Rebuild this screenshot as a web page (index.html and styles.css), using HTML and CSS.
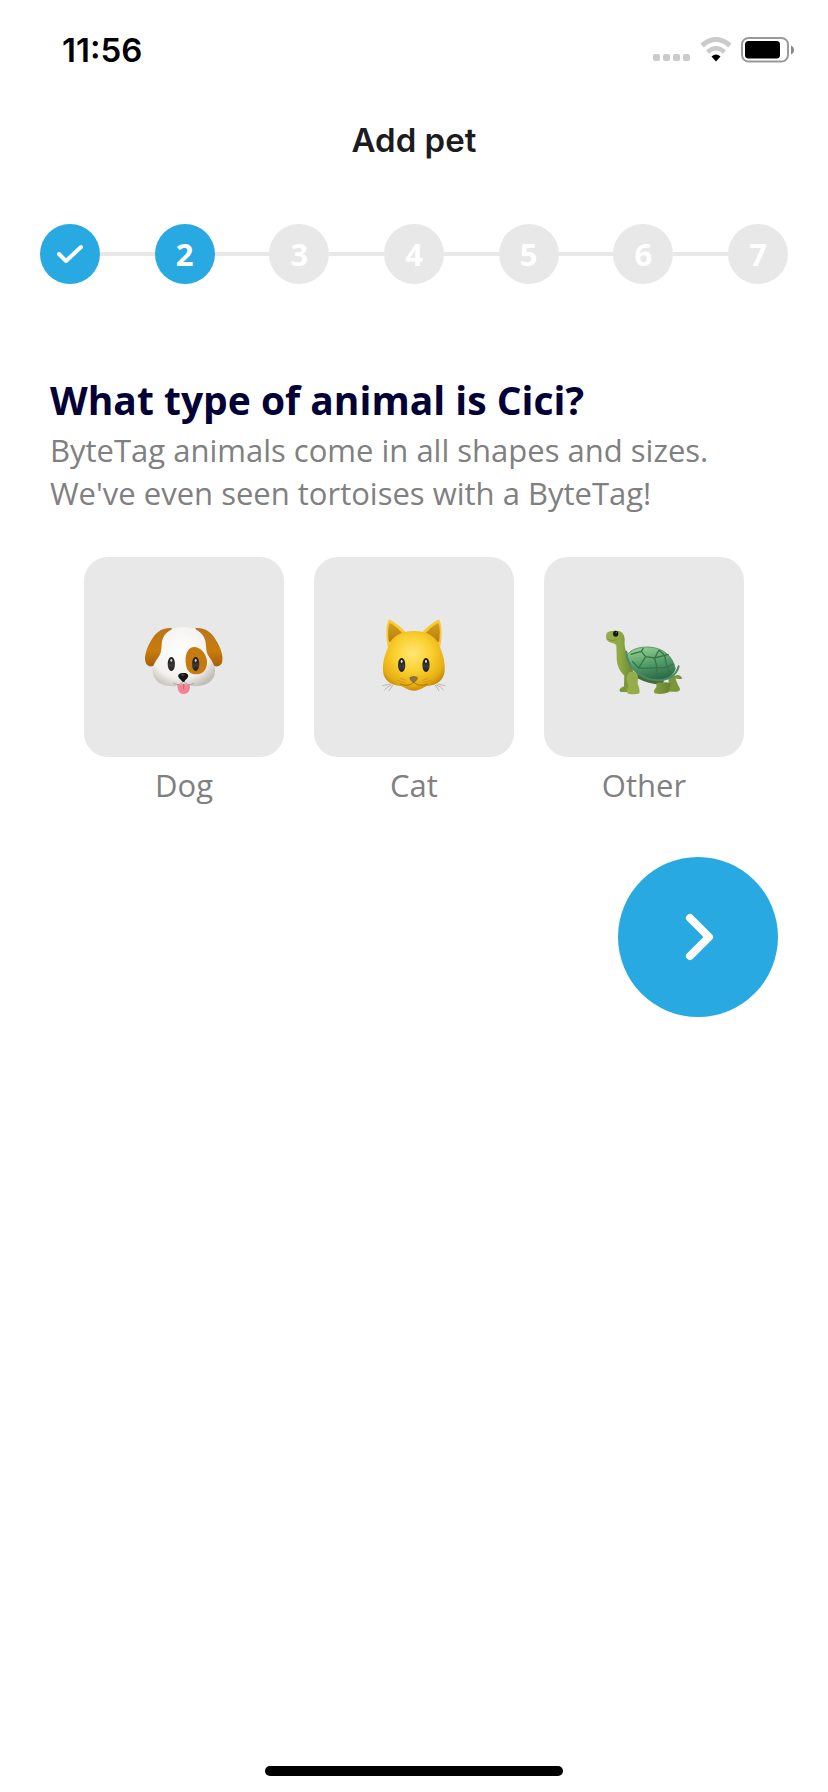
FILE: index.html
```
<!DOCTYPE html>
<html lang="en">
<head>
  <meta charset="UTF-8" />
  <meta name="viewport" content="width=device-width, initial-scale=1.0"/>
  <title>Add pet</title>
  <link rel="stylesheet" href="styles.css">
</head>
<body>
  <div class="status-bar">
    <span class="time">11:56</span>
    <div class="status-icons">
      <svg width="38" height="26" viewBox="0 0 38 26" fill="#cbcbcb">
        <rect x="0" y="17" width="7" height="7" rx="2"/>
        <rect x="10" y="17" width="7" height="7" rx="2"/>
        <rect x="20" y="17" width="7" height="7" rx="2"/>
        <rect x="30" y="17" width="7" height="7" rx="2"/>
      </svg>
      <svg width="32" height="26" viewBox="0 0 32 26" fill="none">
        <path d="M2 8.500Q16-3.500 30 8.500" stroke="#cbcbcb" stroke-width="5"/>
        <path d="M7.500 15Q16 7.500 24.500 15" stroke="#cbcbcb" stroke-width="4.500"/>
        <path d="M11.500 19.500Q16 15.500 20.500 19.500L16 24.500Z" fill="#000"/>
      </svg>
      <svg width="54" height="26" viewBox="0 0 54 26">
        <rect x="1" y="1" width="46" height="23.500" rx="6.500" fill="none" stroke="#999" stroke-width="2"/>
        <rect x="4" y="4" width="35" height="17.500" rx="3.500"/>
        <path d="M50 8.500Q53 10 53 13T50 17.500Z" fill="#888"/>
      </svg>
    </div>
  </div>

  <header class="header">
    <h1>Add pet</h1>
  </header>

  <ol class="steps">
    <li class="step">
      <span class="circle active">
        <svg width="28" height="20" viewBox="0 0 28 20" fill="none" stroke="#fff" stroke-width="4" stroke-linecap="round" stroke-linejoin="round" role="img" aria-label="Done">
          <path d="M3 10L10 17L25 3"/>
        </svg>
      </span>
    </li>
    <li class="step"><span class="circle active">2</span></li>
    <li class="step"><span class="circle">3</span></li>
    <li class="step"><span class="circle">4</span></li>
    <li class="step"><span class="circle">5</span></li>
    <li class="step"><span class="circle">6</span></li>
    <li class="step"><span class="circle">7</span></li>
  </ol>

  <main class="content">
    <div class="question">
      <h2>What type of animal is Cici?</h2>
      <p>ByteTag animals come in all shapes and sizes.<br>We've even seen tortoises with a ByteTag!</p>
    </div>

    <div class="options">
      <button class="option" type="button">
        <span class="tile">
          <svg class="animal" viewBox="-3 6 330 330">
            <defs>
              <radialGradient id="dog-face" cx=".45" cy=".4" r=".66">
                <stop offset="0" stop-color="#fff"/>
                <stop offset=".7" stop-color="#f3f2f0"/>
                <stop offset="1" stop-color="#c2beb7"/>
              </radialGradient>
              <linearGradient id="dog-ear" x1="0" y1="0" x2="0" y2="1">
                <stop offset="0" stop-color="#b8761b"/>
                <stop offset=".6" stop-color="#c87c0c"/>
                <stop offset="1" stop-color="#a45f08"/>
              </linearGradient>
              <linearGradient id="eye" x1="0" y1="0" x2="0" y2="1">
                <stop offset="0" stop-color="#111"/>
                <stop offset=".6" stop-color="#3a3a3a"/>
                <stop offset="1" stop-color="#1a1a1a"/>
              </linearGradient>
            </defs>
            <path fill="url(#dog-ear)" d="M126 84C94 82 76 98 62 124C50 145 43 166 46 184C48 196 57 201 67 199C83 195 92 168 98 148ZM196 84C228 82 246 98 260 124C272 145 280 166 277 184C275 196 266 201 256 199C240 195 231 168 225 148Z"/>
            <path fill="url(#dog-face)" d="M161 81C190 81 212 92 222 112C232 131 224 151 236 169C247 184 257 199 255 217C252 244 230 257 203 258C188 260 176 255 161 255C146 255 135 260 119 258C91 256 71 242 68 217C66 199 76 184 87 169C99 151 91 131 100 112C110 92 132 81 161 81Z"/>
            <path fill="#c67b10" d="M191 141C211 140 228 160 231 182C233 207 219 222 201 223C182 224 170 212 168 194C163 166 173 142 191 141Z"/>
            <ellipse cx="124" cy="192" rx="11" ry="21" fill="url(#eye)"/>
            <ellipse cx="197" cy="192" rx="11" ry="21" fill="url(#eye)"/>
            <ellipse cx="124" cy="181" rx="3" ry="5" fill="#ccc"/>
            <ellipse cx="197" cy="181" rx="3" ry="5" fill="#ccc"/>
            <path fill="#f48495" d="M143 251C149 258 154 251 161 251C168 251 173 258 179 251C183 268 176 282 161 282C146 282 141 267 143 251Z"/>
            <path d="M161 252V268" stroke="#d85d76" stroke-width="3"/>
            <path d="M130 250Q151 261 161 242Q171 261 192 250" fill="none" stroke="#aaa49c" stroke-width="3"/>
            <path fill="#151515" d="M160 219C171 218 177 224 174 231C172 236 165 240 164 244Q160 248 156 244C155 240 147 236 145 230C143 223 150 219 160 219Z"/>
            <ellipse cx="158" cy="225" rx="6" ry="2" fill="#555"/>
          </svg>
        </span>
        <span class="name">Dog</span>
      </button>

      <button class="option" type="button">
        <span class="tile">
          <svg class="animal" viewBox="-3 6 330 330">
            <defs>
              <radialGradient id="cat-face" cx=".48" cy=".38" r=".66">
                <stop offset="0" stop-color="#ffe777"/>
                <stop offset=".45" stop-color="#fbd02f"/>
                <stop offset=".8" stop-color="#e8ae12"/>
                <stop offset="1" stop-color="#b97c08"/>
              </radialGradient>
              <linearGradient id="cat-ear" x1="0" y1="0" x2="0" y2="1">
                <stop offset="0" stop-color="#d8a01a"/>
                <stop offset="1" stop-color="#b57d0a"/>
              </linearGradient>
            </defs>
            <path fill="#f6ca3a" d="M83 142C78 110 77 75 86 60C92 56 126 84 137 97ZM241 142C246 110 247 75 238 60C232 56 198 84 187 97Z"/>
            <path fill="url(#cat-ear)" d="M87 127C83 103 84 78 89 69C105 76 124 94 133 108ZM237 127C241 103 240 78 235 69C219 76 200 94 191 108Z"/>
            <path fill="url(#cat-face)" d="M162 93C202 93 228 110 238 137C249 162 256 187 254 213C251 242 229 255 207 257C191 258 181 272 162 272C143 272 133 258 117 257C95 255 71 242 69 213C67 187 75 162 86 137C96 110 122 93 162 93Z"/>
            <g fill="none" stroke-linecap="round">
              <path d="M161 246C154 256 136 259 122 252M161 246C168 256 187 259 202 252" stroke="#a3730f" stroke-width="3"/>
              <path d="M111 241L133 247M214 241L192 247M122 235L137 241M203 235L188 241" stroke="#c48f18" stroke-width="2"/>
              <path d="M69 257L91 252M74 269Q83 259 94 255M87 272L98 256M255 257L233 252M250 269Q241 259 230 255M237 272L226 256" stroke="#a29b8e" stroke-width="2"/>
            </g>
            <ellipse cx="125" cy="195" rx="11" ry="21" fill="url(#eye)"/>
            <ellipse cx="198" cy="195" rx="11" ry="21" fill="url(#eye)"/>
            <ellipse cx="125" cy="184" rx="3" ry="5" fill="#ddd"/>
            <ellipse cx="198" cy="184" rx="3" ry="5" fill="#ddd"/>
            <path fill="#8b7350" stroke="#6e572f" stroke-width="2" d="M151 232Q161 227 171 232C175 236 169 241 164 246Q161 249 158 246C153 241 147 236 151 232Z"/>
          </svg>
        </span>
        <span class="name">Cat</span>
      </button>

      <button class="option" type="button">
        <span class="tile">
          <svg class="animal" viewBox="-3 6 330 330">
            <defs>
              <linearGradient id="skin" x1="0" y1="0" x2="1" y2="0">
                <stop offset="0" stop-color="#98ae4e"/>
                <stop offset=".5" stop-color="#8ea943"/>
                <stop offset="1" stop-color="#65822f"/>
              </linearGradient>
              <linearGradient id="shell" x1=".3" y1="0" x2=".6" y2="1">
                <stop offset="0" stop-color="#93cf91"/>
                <stop offset=".5" stop-color="#539d6a"/>
                <stop offset="1" stop-color="#256746"/>
              </linearGradient>
            </defs>
            <path fill="#7c963a" d="M103 222H128V266Q124 277 92 276C84 271 91 264 102 259ZM236 232L253 224C257 238 262 253 269 264Q273 274 260 275H235ZM253 229Q269 219 277 236Q268 238 255 235Z"/>
            <path fill="url(#skin)" d="M76 92C94 91 104 101 104 119C102 140 108 156 117 177L134 228L113 234C89 219 79 195 80 167L79 137Q76 130 64 128C50 125 46 115 49 102C51 94 64 92 76 92Z"/>
            <path fill="#456b36" d="M120 218L222 230L220 253Q178 255 143 235Z"/>
            <path fill="url(#shell)" stroke="#397951" stroke-width="2" d="M110 168C119 149 145 140 178 141C220 144 248 168 256 206C250 229 222 245 196 242C158 237 124 212 110 168Z"/>
            <path d="M122 163L154 154L167 170L194 174L207 150M154 154L160 144M167 170L146 204M194 174L201 203L197 236M201 203L167 205L146 204L127 184M201 203L231 202L249 192M231 202L224 166L236 163M194 174L224 166L207 150M231 202L242 218" fill="none" stroke="#397446" stroke-width="4" stroke-linejoin="round"/>
            <path d="M109 155C111 203 151 238 202 241C235 242 260 225 266 199" fill="none" stroke="#4f8867" stroke-width="6" stroke-linecap="round"/>
            <path fill="url(#skin)" d="M117 217C130 212 143 218 144 230L143 251Q151 271 148 280Q137 285 114 281C108 274 112 267 115 258C109 243 108 230 117 217ZM199 250C214 246 232 246 242 251L236 277Q216 285 193 280C190 272 194 267 199 262Z"/>
            <ellipse cx="77" cy="101" rx="8" ry="9" fill="#171b0d"/>
            <circle cx="79" cy="97" r="2" fill="#777"/>
            <path d="M52 117Q65 126 80 119" fill="none" stroke="#71883a" stroke-width="2"/>
          </svg>
        </span>
        <span class="name">Other</span>
      </button>
    </div>

    <button class="next" type="button" aria-label="Next">
      <svg width="48" height="48" viewBox="0 0 48 48" fill="none" stroke="#fff" stroke-width="8" stroke-linecap="round" stroke-linejoin="round">
        <path d="M16 5L35 24L16 43"/>
      </svg>
    </button>
  </main>

  <div class="home-indicator"></div>
</body>
</html>
```
FILE: styles.css
```
* {
  box-sizing: border-box;
}
body {
  margin: 0;
  min-height: 100vh;
  display: flex;
  flex-direction: column;
  background-color: #fff;
  font-family: "Open Sans", sans-serif;
  color: #808080;
}
h1, h2, p, ol {
  margin: 0;
  padding: 0;
}
button {
  padding: 0;
  border: none;
  background: none;
  font: inherit;
  color: inherit;
  cursor: pointer;
}
svg {
  display: block;
}
.status-bar {
  display: flex;
  justify-content: space-between;
  align-items: center;
  height: 100px;
  padding: 0 33px 0 62px;
}
.time {
  font-family: "Inter", sans-serif;
  font-size: 33px;
  font-weight: 600;
  color: #000;
}
.status-icons {
  display: flex;
  gap: 9px;
}
.header {
  display: flex;
  align-items: center;
  justify-content: center;
  height: 80px;
}
.header h1 {
  font-family: "Inter", sans-serif;
  font-size: 33px;
  font-weight: 600;
  color: #1c1c1e;
}
.steps {
  display: flex;
  list-style: none;
  padding: 44px 40px 0;
}
.step {
  display: flex;
  align-items: center;
}
.step + .step {
  flex: 1;
}
.step + .step::before {
  content: "";
  flex: 1;
  height: 4px;
  background-color: #e8e8e8;
}
.circle {
  display: flex;
  align-items: center;
  justify-content: center;
  width: 60px;
  height: 60px;
  border-radius: 50%;
  background-color: #e8e8e8;
  color: #fff;
  font-size: 31px;
  font-weight: 700;
  line-height: 58px;
}
.circle.active {
  background-color: #29a9e1;
}
.content {
  display: flex;
  flex-direction: column;
  padding: 90px 50px 0;
}
.question h2 {
  margin-bottom: 3px;
  font-size: 39px;
  font-weight: 700;
  line-height: 52px;
  color: #030035;
}
.question p {
  font-size: 31px;
  font-weight: 400;
  line-height: 43px;
}
.options {
  display: grid;
  grid-template-columns: repeat(3, 1fr);
  gap: 30px;
  padding: 42px 34px 0;
}
.option {
  display: flex;
  flex-direction: column;
}
.tile {
  display: flex;
  align-items: center;
  justify-content: center;
  width: 100%;
  aspect-ratio: 1;
  border-radius: 24px;
  background-color: #e8e8e8;
}
.animal {
  width: 55%;
}
.name {
  width: 100%;
  margin-top: 7px;
  font-size: 31px;
  font-weight: 400;
  line-height: 43px;
  text-align: center;
}
.next {
  display: flex;
  align-items: center;
  justify-content: center;
  align-self: flex-end;
  width: 160px;
  height: 160px;
  margin-top: 50px;
  border-radius: 50%;
  background-color: #29a9e1;
}
.home-indicator {
  width: 36%;
  height: 10px;
  margin: auto auto 16px;
  border-radius: 5px;
  background-color: #000;
}
```
